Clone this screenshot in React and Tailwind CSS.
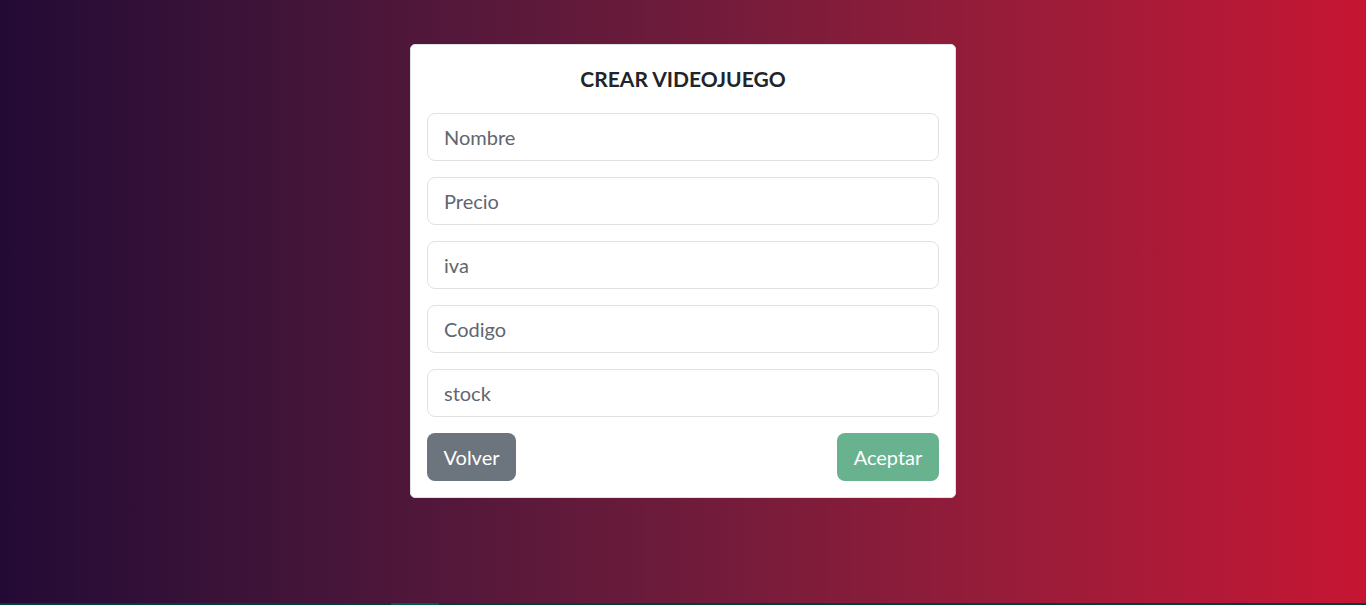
const fields = ["Nombre", "Precio", "iva", "Codigo", "stock"];

export default function App() {
  return (
    <div className="flex h-[605px] w-full flex-col" style={{ fontFamily: "Lato, 'Noto Sans', sans-serif" }}>
      <main className="flex flex-1 justify-center bg-gradient-to-r from-[#230a35] to-[#c61533] pt-[44px]">
        <form className="flex h-[454px] w-[546px] flex-col rounded-[5px] border border-[#dee2e6] bg-white px-4 pt-4">
          <h1 className="mb-4 text-center text-[21px] font-bold leading-9 text-[#212529]">CREAR VIDEOJUEGO</h1>
          <div className="flex flex-col gap-4">
            {fields.map((f) => (
              <input
                key={f}
                type="text"
                placeholder={f}
                className="h-12 w-full rounded-lg border border-[#dee2e6] px-4 text-[20px] text-[#212529] outline-none placeholder:text-[#5f6670]"
              />
            ))}
          </div>
          <div className="mt-4 flex justify-between">
            <button type="button" className="h-12 w-[89px] rounded-lg bg-[#6c757d] text-[20px] text-white">
              Volver
            </button>
            <button type="submit" disabled className="h-12 w-[102px] rounded-lg bg-[#68b28f] text-[20px] text-white">
              Aceptar
            </button>
          </div>
        </form>
      </main>
      <div className="flex h-[2px] bg-[#003d3d]">
        <div className="ml-[391px] w-[48px] bg-[#005858]" />
      </div>
    </div>
  );
}
